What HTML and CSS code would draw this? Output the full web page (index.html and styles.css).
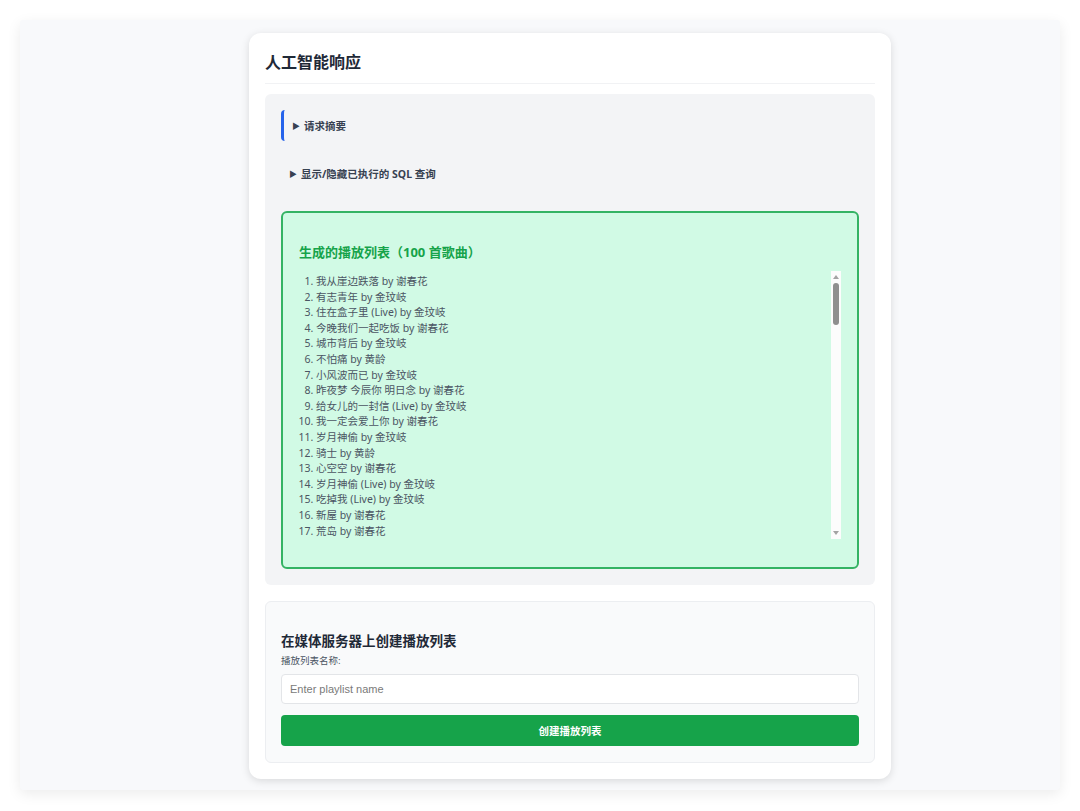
FILE: index.html
```html
<!DOCTYPE html>
<html lang="zh">
<head>
<meta charset="utf-8">
<title>人工智能响应</title>
<link rel="stylesheet" href="styles.css">
</head>
<body>
<div class="frame">
  <div class="card">
    <h2 class="card-title">人工智能响应</h2>
    <div class="response">
      <div class="detail detail-active"><span class="tri">▶</span>请求摘要</div>
      <div class="detail"><span class="tri">▶</span>显示/隐藏已执行的 SQL 查询</div>
      <div class="playlist">
        <h3 class="playlist-title">生成的播放列表（100 首歌曲）</h3>
        <div class="scroll-wrap">
          <div class="scroll">
            <ol class="songs">
              <li>我从崖边跌落 by 谢春花</li>
              <li>有志青年 by 金玟岐</li>
              <li>住在盒子里 (Live) by 金玟岐</li>
              <li>今晚我们一起吃饭 by 谢春花</li>
              <li>城市背后 by 金玟岐</li>
              <li>不怕痛 by 黄龄</li>
              <li>小风波而已 by 金玟岐</li>
              <li>昨夜梦 今辰你 明日念 by 谢春花</li>
              <li>给女儿的一封信 (Live) by 金玟岐</li>
              <li>我一定会爱上你 by 谢春花</li>
              <li>岁月神偷 by 金玟岐</li>
              <li>骑士 by 黄龄</li>
              <li>心空空 by 谢春花</li>
              <li>岁月神偷 (Live) by 金玟岐</li>
              <li>吃掉我 (Live) by 金玟岐</li>
              <li>新屋 by 谢春花</li>
              <li>荒岛 by 谢春花</li>
              <li>借我 by 谢春花</li>
              <li>炼爱 by 金玟岐</li>
              <li>痒 by 黄龄</li>
              <li>一棵会开花的树 by 谢春花</li>
              <li>腻味 by 金玟岐</li>
              <li>特别的人 by 黄龄</li>
              <li>知我 by 谢春花</li>
              <li>送你 by 金玟岐</li>
              <li>风吹半夏 by 黄龄</li>
              <li>晚风 by 谢春花</li>
              <li>独角戏 by 金玟岐</li>
              <li>无双 by 黄龄</li>
              <li>鲸落 by 谢春花</li>
              <li>秋天的信 by 金玟岐</li>
              <li>HIGH歌 by 黄龄</li>
              <li>失物招领 by 谢春花</li>
              <li>爱的期限 by 金玟岐</li>
              <li>静夜思 by 黄龄</li>
              <li>还要多远才能进入你的心 by 谢春花</li>
              <li>我的世界 by 金玟岐</li>
              <li>人间 by 黄龄</li>
              <li>不问 by 谢春花</li>
              <li>回到未来 by 金玟岐</li>
              <li>念念不忘 by 黄龄</li>
              <li>月亮 by 谢春花</li>
              <li>在我心里 by 金玟岐</li>
              <li>如梦 by 黄龄</li>
              <li>空心 by 谢春花</li>
              <li>小幸运 (Live) by 金玟岐</li>
              <li>春风十里 by 黄龄</li>
              <li>旧梦 by 谢春花</li>
              <li>勇气 by 金玟岐</li>
              <li>桃花诺 by 黄龄</li>
              <li>遇见你 by 谢春花</li>
              <li>慢慢 by 金玟岐</li>
              <li>梦里 by 黄龄</li>
              <li>初雪 by 谢春花</li>
              <li>星星 by 金玟岐</li>
              <li>花开 by 黄龄</li>
              <li>远方 by 谢春花</li>
              <li>夏天 by 金玟岐</li>
              <li>烟火 by 黄龄</li>
              <li>南风 by 谢春花</li>
              <li>拥抱 by 金玟岐</li>
              <li>流年 by 黄龄</li>
              <li>雨季 by 谢春花</li>
              <li>归途 by 金玟岐</li>
              <li>星河 by 黄龄</li>
              <li>故乡 by 谢春花</li>
              <li>时光 by 金玟岐</li>
              <li>云端 by 黄龄</li>
              <li>清晨 by 谢春花</li>
              <li>晚安 by 金玟岐</li>
              <li>长夜 by 黄龄</li>
              <li>白日梦 by 谢春花</li>
              <li>小城 by 金玟岐</li>
              <li>天涯 by 黄龄</li>
              <li>窗外 by 谢春花</li>
              <li>信 by 金玟岐</li>
              <li>海 by 黄龄</li>
              <li>树 by 谢春花</li>
              <li>风 by 金玟岐</li>
              <li>光 by 黄龄</li>
              <li>山 by 谢春花</li>
              <li>路 by 金玟岐</li>
              <li>雪 by 黄龄</li>
              <li>灯 by 谢春花</li>
              <li>桥 by 金玟岐</li>
              <li>影 by 黄龄</li>
              <li>秋 by 谢春花</li>
              <li>冬 by 金玟岐</li>
              <li>夏 by 黄龄</li>
              <li>春 by 谢春花</li>
              <li>梦 by 金玟岐</li>
              <li>歌 by 黄龄</li>
              <li>家 by 谢春花</li>
              <li>心 by 金玟岐</li>
              <li>爱 by 黄龄</li>
              <li>念 by 谢春花</li>
              <li>思 by 金玟岐</li>
              <li>情 by 黄龄</li>
              <li>愿 by 谢春花</li>
              <li>安 by 金玟岐</li>
            </ol>
          </div>
          <div class="scrollbar" aria-hidden="true">
            <span class="sb-arrow sb-up"></span>
            <span class="sb-thumb"></span>
            <span class="sb-arrow sb-down"></span>
          </div>
        </div>
      </div>
    </div>
    <div class="create">
      <h3 class="create-title">在媒体服务器上创建播放列表</h3>
      <label class="create-label" for="pl-name">播放列表名称:</label>
      <input class="create-input" id="pl-name" type="text" placeholder="Enter playlist name">
      <button class="create-btn" type="button">创建播放列表</button>
    </div>
  </div>
</div>
</body>
</html>
```

FILE: styles.css
```css
html, body {
  margin: 0;
  padding: 0;
  background: #ffffff;
}
body {
  padding: 20px;
  font-family: "Noto Sans", "Noto Sans CJK SC", sans-serif;
  color: #1f2937;
}
.frame {
  height: 770px;
  box-sizing: border-box;
  background: #f8f9fb;
  border-radius: 3px;
  box-shadow: 0 4px 14px rgba(0, 0, 0, 0.08);
  display: flex;
  justify-content: center;
  padding: 13px 0 0 60px;
}
.card {
  width: 642px;
  height: 746px;
  box-sizing: border-box;
  background: #ffffff;
  border-radius: 12px;
  box-shadow: 0 2px 8px rgba(0, 0, 0, 0.13);
  padding: 16px;
}
.card-title {
  margin: 0;
  font-size: 16px;
  line-height: 26px;
  font-weight: 700;
  color: #1f2937;
  padding-bottom: 8px;
  border-bottom: 1px solid #f1f2f4;
  margin-bottom: 10px;
}
.response {
  background: #f3f4f6;
  border-radius: 6px;
  padding: 16px;
  display: flex;
  flex-direction: column;
}
.detail {
  height: 31px;
  display: flex;
  align-items: center;
  padding-left: 8px;
  font-size: 10.5px;
  font-weight: 700;
  color: #374151;
  margin-bottom: 17px;
}
.detail-active {
  border-left: 3px solid #2563eb;
  border-radius: 4px 0 0 4px;
}
.tri {
  font-size: 8px;
  margin-right: 4px;
  color: #374151;
}
.playlist {
  margin-top: 5px;
  background: #d1fae5;
  border: 2px solid #34b364;
  border-radius: 6px;
  padding: 30px 16px 28px 16px;
}
.playlist-title {
  margin: 0 0 10px 0;
  font-size: 13px;
  line-height: 18px;
  font-weight: 700;
  color: #16a34a;
}
.scroll-wrap {
  position: relative;
  height: 268px;
}
.scroll {
  height: 268px;
  overflow: hidden;
  padding: 3px 10px 0 0;
  box-sizing: border-box;
}
.scrollbar {
  position: absolute;
  top: 0;
  right: 0;
  width: 10px;
  height: 268px;
  background: #fcfcfc;
}
.sb-arrow {
  position: absolute;
  left: 2px;
  width: 0;
  height: 0;
  border-left: 3px solid transparent;
  border-right: 3px solid transparent;
}
.sb-up {
  top: 4px;
  border-bottom: 4px solid #a3a3a3;
}
.sb-down {
  bottom: 4px;
  border-top: 4px solid #a3a3a3;
}
.sb-thumb {
  position: absolute;
  top: 12px;
  left: 2px;
  width: 6px;
  height: 42px;
  border-radius: 3px;
  background: #8f8f8f;
}
.songs {
  margin: 0;
  padding: 0 0 0 17px;
  font-size: 10.5px;
  line-height: 15.6px;
  color: #4b5563;
}
.create {
  margin-top: 16px;
  background: #f9fafb;
  border: 1px solid #eceef1;
  border-radius: 6px;
  padding: 29px 15px 16px 15px;
  display: flex;
  flex-direction: column;
}
.create-title {
  margin: 0 0 3px 0;
  font-size: 13.5px;
  line-height: 20px;
  font-weight: 700;
  color: #1f2937;
}
.create-label {
  font-size: 9.5px;
  line-height: 14px;
  color: #4b5563;
  margin-bottom: 6px;
}
.create-input {
  height: 30px;
  box-sizing: border-box;
  border: 1px solid #e3e5e8;
  border-radius: 4px;
  background: #ffffff;
  padding: 0 8px;
  font-family: "Liberation Sans", Arial, sans-serif;
  font-size: 11px;
  color: #1f2937;
  margin: 0 0 11px 0;
  outline: none;
}
.create-input::placeholder {
  color: #7a7a7a;
}
.create-btn {
  height: 31px;
  border: none;
  border-radius: 4px;
  background: #16a34a;
  color: #ffffff;
  font-family: "Noto Sans", "Noto Sans CJK SC", sans-serif;
  font-size: 10.5px;
  font-weight: 700;
  cursor: pointer;
}
```
